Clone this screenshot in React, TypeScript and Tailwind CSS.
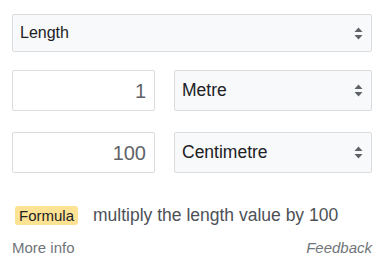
import React from "react";

function Arrows() {
  return (
    <svg width="9" height="13" viewBox="0 0 9 13" className="shrink-0">
      <path d="M4.5 0.5 L8.5 5 L0.5 5 Z" fill="#5f6368" />
      <path d="M0.5 8 L8.5 8 L4.5 12.5 Z" fill="#5f6368" />
    </svg>
  );
}

function Select({ label, size }: { label: string; size: string }) {
  return (
    <div className="flex flex-1 items-center justify-between rounded-[2px] border border-[#dadce0] bg-[#f8f9fa] pl-[7px] pr-[8px]">
      <span className={`${size} text-[#202124]`}>{label}</span>
      <Arrows />
    </div>
  );
}

function ValueBox({ value }: { value: string }) {
  return (
    <div className="flex w-[143px] items-center justify-end rounded-[2px] border border-[#dadce0] bg-white pr-[8px] text-[20px] text-[#5f6368]">
      {value}
    </div>
  );
}

export default function App() {
  return (
    <div className="h-[263px] w-[387px] bg-white pl-3 pr-[15px] pt-[14px] font-['Liberation_Sans',Arial,sans-serif]">
      <div className="flex h-[38px]">
        <Select label="Length" size="text-[16px]" />
      </div>

      <div className="mt-[18px] flex h-[41px] gap-[19px]">
        <ValueBox value="1" />
        <Select label="Metre" size="text-[17.5px]" />
      </div>

      <div className="mt-[21px] flex h-[41px] gap-[19px]">
        <ValueBox value="100" />
        <Select label="Centimetre" size="text-[17.5px]" />
      </div>

      <div className="mt-[29px] flex items-center">
        <span className="ml-[3px] rounded-[3px] bg-[#fde293] px-[4px] py-[1px] text-[15px] leading-[17px] text-[#202124]">
          Formula
        </span>
        <span className="ml-[15px] text-[17.5px] text-[#4d5156]">
          multiply the length value by 100
        </span>
      </div>

      <div className="mt-[9px] flex justify-between text-[15px] text-[#70757a]">
        <span>More info</span>
        <span className="italic">Feedback</span>
      </div>
    </div>
  );
}
